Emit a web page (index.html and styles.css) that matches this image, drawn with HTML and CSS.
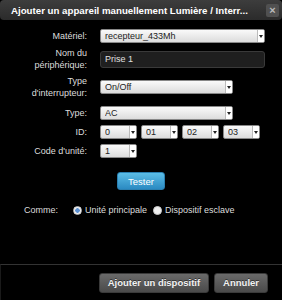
FILE: index.html
```html
<!DOCTYPE html>
<html lang="fr">
<head>
    <meta charset="UTF-8">
    <title>Ajouter un appareil</title>
    <link rel="stylesheet" href="styles.css">
</head>
<body>
    <div class="dialog">
        <div class="titlebar">
            <span class="title">Ajouter un appareil manuellement Lumière / Interr...</span>
            <span class="close">&times;</span>
        </div>

        <form class="form" onsubmit="return false;">
            <div class="row">
                <label>Matériel:</label>
                <span class="select wide"><select><option>recepteur_433Mh</option></select></span>
            </div>
            <div class="row tall">
                <label>Nom du<br>périphérique:</label>
                <input class="text" type="text" value="Prise 1">
            </div>
            <div class="row tall taller">
                <label>Type<br>d'interrupteur:</label>
                <span class="select mid"><select><option>On/Off</option></select></span>
            </div>
            <div class="row">
                <label>Type:</label>
                <span class="select mid"><select><option>AC</option></select></span>
            </div>
            <div class="row">
                <label>ID:</label>
                <div class="ids">
                    <span class="select small"><select><option>0</option></select></span>
                    <span class="select small"><select><option>01</option></select></span>
                    <span class="select small"><select><option>02</option></select></span>
                    <span class="select small"><select><option>03</option></select></span>
                </div>
            </div>
            <div class="row">
                <label>Code d'unité:</label>
                <span class="select small"><select><option>1</option></select></span>
            </div>

            <div class="test">
                <button type="button" class="btn-blue">Tester</button>
            </div>

            <div class="comme">
                <span class="comme-label">Comme:</span>
                <span class="radio checked"></span>
                <span>Unité principale</span>
                <span class="radio"></span>
                <span>Dispositif esclave</span>
            </div>
        </form>

        <div class="footer">
            <button type="button" class="btn-grey">Ajouter un dispositif</button>
            <button type="button" class="btn-grey">Annuler</button>
        </div>
    </div>
</body>
</html>
```

FILE: styles.css
```css
body {
    margin: 0;
    background: #000;
    font-family: "Liberation Sans", Arial, sans-serif;
    font-size: 9px;
    color: #ddd;
}
.dialog {
    width: 282px;
    height: 300px;
    display: flex;
    flex-direction: column;
}
.titlebar {
    height: 20px;
    display: flex;
    align-items: center;
    justify-content: space-between;
    padding: 0 3px 0 11px;
    background: linear-gradient(#3d3d3d, #2b2b2b);
    border-radius: 4px;
}
.title {
    color: #fff;
    font-weight: bold;
    font-size: 9.7px;
    white-space: nowrap;
}
.close {
    width: 13px;
    height: 13px;
    background: #505050;
    border-radius: 2px;
    color: #bbb;
    font-size: 11px;
    font-weight: bold;
    line-height: 13px;
    text-align: center;
}
.form {
    padding-top: 6px;
    flex: 1;
}
.row {
    display: grid;
    grid-template-columns: 87px 1fr;
    column-gap: 13px;
    align-items: center;
    height: 19px;
}
.row.tall {
    height: 28px;
}
.row.taller {
    height: 30px;
    padding-bottom: 2px;
    box-sizing: border-box;
}
.row label {
    text-align: right;
    line-height: 12px;
}
.select {
    position: relative;
    display: block;
    height: 14px;
    box-sizing: border-box;
}
.select select {
    appearance: none;
    width: 100%;
    height: 14px;
    margin: 0;
    padding: 0 0 0 4px;
    border: 1px solid #888;
    border-radius: 2px;
    background: linear-gradient(#fafafa, #dcdcdc);
    font-family: "Liberation Sans", Arial, sans-serif;
    font-size: 9px;
    color: #222;
    line-height: 12px;
}
.select::after {
    content: "";
    position: absolute;
    right: 1px;
    top: 1px;
    bottom: 1px;
    width: 6px;
    border-left: 1px solid #bbb;
    background: #fff;
    border-radius: 0 1px 1px 0;
}
.select::before {
    content: "";
    position: absolute;
    right: 2px;
    top: 6px;
    border-left: 2px solid transparent;
    border-right: 2px solid transparent;
    border-top: 3px solid #222;
    z-index: 1;
}
.select.wide {
    width: 165px;
}
.select.mid {
    width: 133px;
}
.select.small {
    width: 37px;
}
.ids {
    display: flex;
    gap: 4px;
}
.text {
    width: 165px;
    height: 17px;
    box-sizing: border-box;
    margin: 0;
    padding: 0 4px;
    background: #1f1f1f;
    border: 1px solid #3a3a3a;
    border-radius: 3px;
    color: #e0e0e0;
    font-family: "Liberation Sans", Arial, sans-serif;
    font-size: 9px;
}
.test {
    text-align: center;
    margin-top: 12px;
}
.btn-blue {
    width: 48px;
    height: 18px;
    border: 1px solid #2a7fb0;
    border-radius: 3px;
    background: linear-gradient(#5bbde6, #2b8ac2);
    color: #fff;
    font-family: "Liberation Sans", Arial, sans-serif;
    font-size: 9.5px;
    padding: 0;
}
.comme {
    display: flex;
    align-items: center;
    margin-top: 14px;
    padding-left: 24px;
    height: 12px;
}
.comme-label {
    width: 49px;
}
.radio {
    width: 9px;
    height: 9px;
    box-sizing: border-box;
    border-radius: 50%;
    background: #eee;
    border: 1px solid #ccc;
    margin-right: 3px;
}
.radio.checked {
    background: radial-gradient(circle, #5b8fd0 0 2px, #eee 2.5px);
}
.radio + span + .radio {
    margin-left: 6px;
}
.footer {
    height: 36px;
    border-top: 1px solid #333;
    border-left: 1px solid #1a1a1a;
    display: flex;
    justify-content: flex-end;
    align-items: center;
    gap: 5px;
    padding-right: 14px;
    box-sizing: border-box;
}
.btn-grey {
    height: 20px;
    padding: 0 8px;
    border: 1px solid #3a3a3a;
    border-radius: 3px;
    background: linear-gradient(#6a6a6a, #4a4a4a);
    color: #f2f2f2;
    font-family: "Liberation Sans", Arial, sans-serif;
    font-size: 9.5px;
    font-weight: bold;
    text-shadow: 0 -1px 0 #333;
}
```
